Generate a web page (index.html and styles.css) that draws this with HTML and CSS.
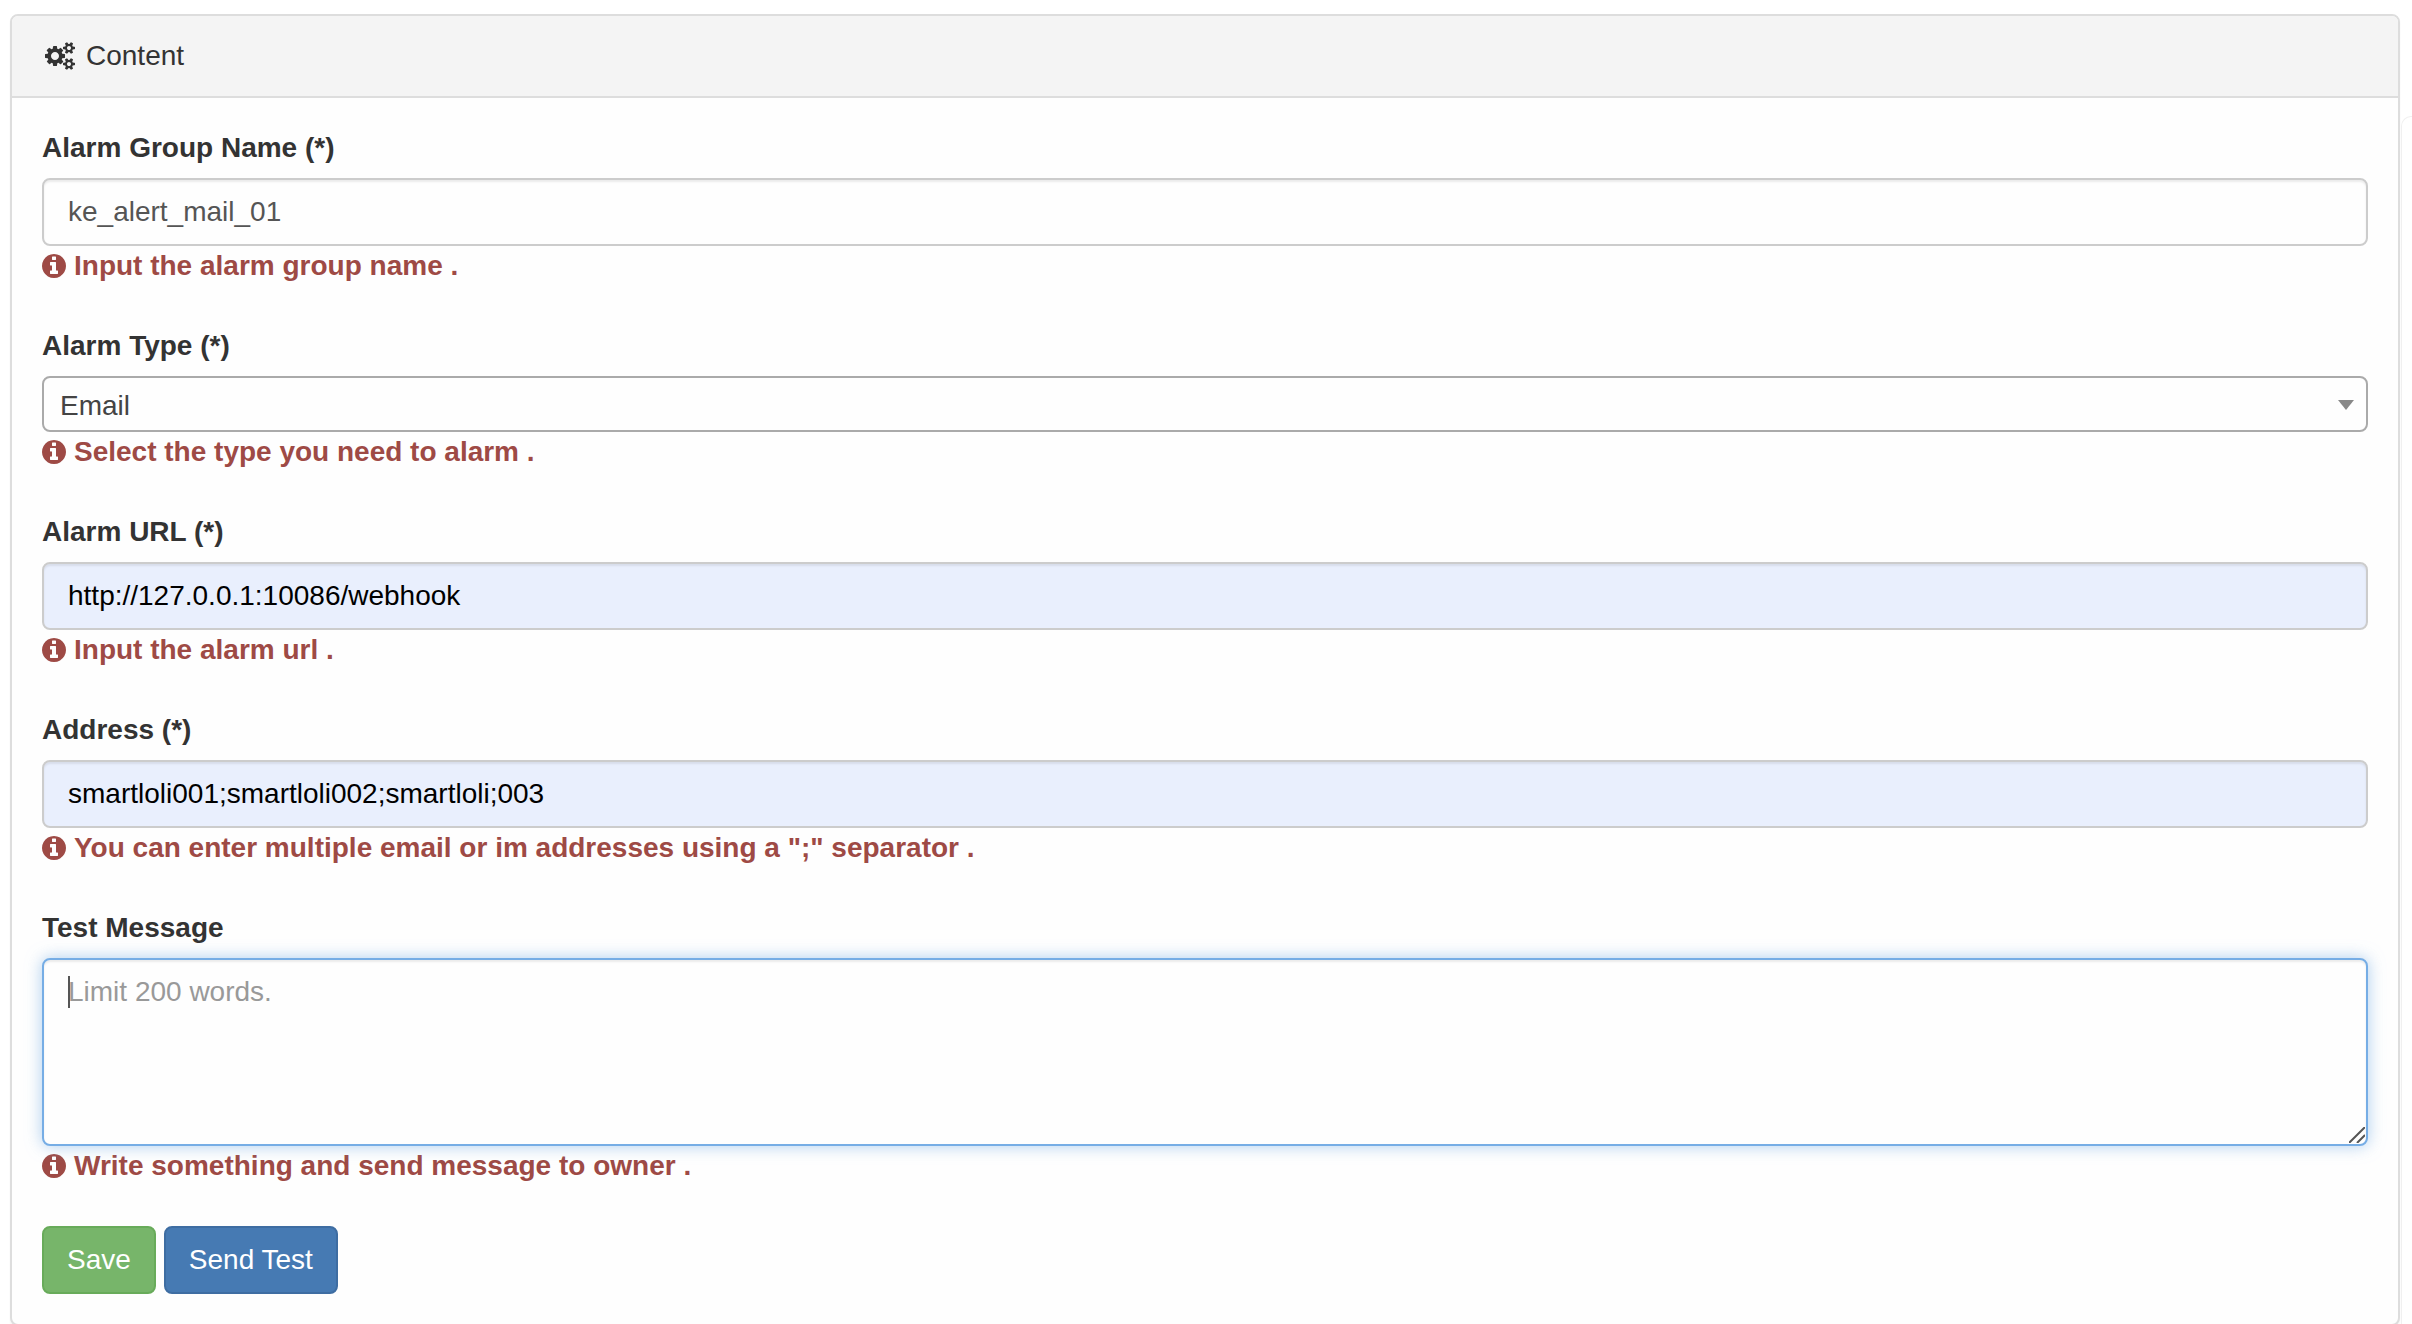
FILE: index.html
```html
<!DOCTYPE html>
<html lang="en">
<head>
    <meta charset="UTF-8">
    <meta name="viewport" content="width=device-width, initial-scale=1.0">
    <title>Alarm Config</title>
    <link rel="stylesheet" href="styles.css">
</head>
<body>
    <svg class="sprite" aria-hidden="true">
        <symbol id="info" viewBox="128 128 1536 1536">
            <path d="M1152 1376v-160q0-14-9-23t-23-9h-96v-512q0-14-9-23t-23-9h-320q-14 0-23 9t-9 23v160q0 14 9 23t23 9h96v320h-96q-14 0-23 9t-9 23v160q0 14 9 23t23 9h448q14 0 23-9t9-23zm-128-896v-160q0-14-9-23t-23-9h-192q-14 0-23 9t-9 23v160q0 14 9 23t23 9h192q14 0 23-9t9-23zm640 416q0 209-103 385.5t-279.5 279.5-385.5 103-385.5-103-279.5-279.5-103-385.5 103-385.5 279.5-279.5 385.5-103 385.5 103 279.5 279.5 103 385.5z"/>
        </symbol>
    </svg>
    <div class="page">
        <div class="panel">
            <div class="panel-heading">
                <svg class="icon-cogs" viewBox="0 0 1920 1792" aria-hidden="true">
                    <path d="M896 896q0-106-75-181t-181-75-181 75-75 181 75 181 181 75 181-75 75-181zm768 512q0-52-38-90t-90-38-90 38-38 90q0 53 37.5 90.5t90.5 37.5 90.5-37.5 37.5-90.5zm0-1024q0-52-38-90t-90-38-90 38-38 90q0 53 37.5 90.5t90.5 37.5 90.5-37.5 37.5-90.5zm-384 421v185q0 10-7 19.5t-16 10.5l-155 24q-11 35-32 76 34 48 90 115 7 11 7 20 0 12-7 19-23 30-82.5 89.5t-78.5 59.5q-11 0-21-7l-115-90q-37 19-77 31-11 108-23 155-7 24-30 24h-186q-11 0-20-7.5t-10-17.5l-23-153q-34-10-75-31l-118 89q-7 7-20 7-11 0-21-8-144-133-144-160 0-9 7-19 10-14 41-53t47-61q-23-44-35-82l-152-24q-10-1-17-9.5t-7-19.5v-185q0-10 7-19.5t16-10.5l155-24q11-35 32-76-34-48-90-115-7-11-7-20 0-12 7-20 22-30 82-89t79-59q11 0 21 7l115 90q34-18 77-32 11-108 23-154 7-24 30-24h186q11 0 20 7.5t10 17.5l23 153q34 10 75 31l118-89q8-7 20-7 11 0 21 8 144 133 144 160 0 8-7 19-12 16-42 54t-45 60q23 48 34 82l152 23q10 2 17 10.5t7 19.5zm640 533v140q0 16-149 31-12 27-30 52 51 113 51 138 0 4-4 7-122 71-124 71-8 0-46-47t-52-68q-20 2-30 2t-30-2q-14 21-52 68t-46 47q-2 0-124-71-4-3-4-7 0-25 51-138-18-25-30-52-149-15-149-31v-140q0-16 149-31 13-29 30-52-51-113-51-138 0-4 4-7 4-2 35-20t59-34 30-16q8 0 46 46.5t52 67.5q20-2 30-2t30 2q51-71 92-112l6-2q4 0 124 70 4 3 4 7 0 25-51 138 17 23 30 52 149 15 149 31zm0-1024v140q0 16-149 31-12 27-30 52 51 113 51 138 0 4-4 7-122 71-124 71-8 0-46-47t-52-68q-20 2-30 2t-30-2q-14 21-52 68t-46 47q-2 0-124-71-4-3-4-7 0-25 51-138-18-25-30-52-149-15-149-31v-140q0-16 149-31 13-29 30-52-51-113-51-138 0-4 4-7 4-2 35-20t59-34 30-16q8 0 46 46.5t52 67.5q20-2 30-2t30 2q51-71 92-112l6-2q4 0 124 70 4 3 4 7 0 25-51 138 17 23 30 52 149 15 149 31z"/>
                </svg>
                <span>Content</span>
            </div>
            <form class="panel-body">
                <div class="form-group">
                    <label for="group_name">Alarm Group Name (*)</label>
                    <input type="text" id="group_name" class="form-control" value="ke_alert_mail_01" autocomplete="off">
                    <p class="hint"><svg class="icon-info" aria-hidden="true"><use href="#info"/></svg>Input the alarm group name .</p>
                </div>
                <div class="form-group">
                    <label for="alarm_type">Alarm Type (*)</label>
                    <div class="select-box">
                        <select id="alarm_type">
                            <option selected>Email</option>
                        </select>
                    </div>
                    <p class="hint"><svg class="icon-info" aria-hidden="true"><use href="#info"/></svg>Select the type you need to alarm .</p>
                </div>
                <div class="form-group">
                    <label for="alarm_url">Alarm URL (*)</label>
                    <input type="text" id="alarm_url" class="form-control filled" value="http://127.0.0.1:10086/webhook">
                    <p class="hint"><svg class="icon-info" aria-hidden="true"><use href="#info"/></svg>Input the alarm url .</p>
                </div>
                <div class="form-group">
                    <label for="address">Address (*)</label>
                    <input type="text" id="address" class="form-control filled" value="smartloli001;smartloli002;smartloli;003">
                    <p class="hint"><svg class="icon-info" aria-hidden="true"><use href="#info"/></svg>You can enter multiple email or im addresses using a ";" separator .</p>
                </div>
                <div class="form-group">
                    <label for="test_msg">Test Message</label>
                    <div class="message-box">
                        <textarea id="test_msg" class="form-control active" rows="4" maxlength="200" placeholder="Limit 200 words."></textarea>
                        <span class="caret"></span>
                        <svg class="grip" viewBox="0 0 16 16" aria-hidden="true">
                            <path d="M0 16L16 0M8 16L16 8"/>
                        </svg>
                    </div>
                    <p class="hint"><svg class="icon-info" aria-hidden="true"><use href="#info"/></svg>Write something and send message to owner .</p>
                </div>
                <div class="buttons">
                    <button type="button" class="btn btn-success">Save</button>
                    <button type="button" class="btn btn-primary">Send Test</button>
                </div>
            </form>
        </div>
        <div class="side-edge"></div>
    </div>
</body>
</html>
```

FILE: styles.css
```css
* {
    box-sizing: border-box;
}
body {
    margin: 0;
    background-color: #fff;
    color: #333;
    font-family: "Helvetica Neue", "Liberation Sans", Arial, sans-serif;
    font-size: 28px;
    line-height: 40px;
}
.sprite {
    display: none;
}
.page {
    display: flex;
    gap: 1px;
    padding: 14px 0 0 10px;
}
.panel {
    flex: 1;
    min-width: 0;
    border: 2px solid #ddd;
    border-radius: 8px;
    background-color: #fefefe;
    box-shadow: 0 2px 2px rgba(0, 0, 0, .05);
}
/* rounded edge of the drawer that sits off screen */
.side-edge {
    flex: 0 0 11px;
    margin-top: 102px;
    border: 1px solid #f0f0f0;
    border-width: 1px 0 0 1px;
    border-radius: 10px 0 0 0;
}
.panel-heading {
    display: flex;
    align-items: center;
    gap: 11px;
    padding: 20px 33px;
    background-color: #f4f4f4;
    border-bottom: 2px solid #ddd;
    border-radius: 6px 6px 0 0;
}
.icon-cogs {
    width: 30px;
    height: 28px;
    fill: #333;
}
.panel-body {
    padding: 30px;
}
.form-group {
    display: flex;
    flex-direction: column;
    gap: 10px;
    margin-bottom: 40px;
}
.form-group label {
    align-self: flex-start;
    font-weight: 700;
}
.form-control {
    display: block;
    width: 100%;
    margin: 0;
    padding: 12px 24px;
    border: 2px solid #ccc;
    border-radius: 8px;
    background-color: #fefefe;
    box-shadow: inset 0 2px 2px rgba(0, 0, 0, .075);
    color: #555;
    font: inherit;
    outline: none;
}
input.form-control {
    height: 68px;
}
.form-control.filled {
    background-color: #e9effd;
    color: #000;
}
textarea.form-control {
    resize: none;
}
.form-control.active,
.form-control:focus {
    border-color: #76ade5;
    box-shadow: inset 0 2px 2px rgba(0, 0, 0, .075), 0 0 16px rgba(118, 173, 229, .6);
}
.form-control::placeholder {
    color: #999;
    opacity: 1;
}
.select-box,
.message-box {
    position: relative;
}
.select-box select {
    display: block;
    width: 100%;
    height: 56px;
    padding: 4px 40px 0 16px;
    appearance: none;
    border: 2px solid #aaa;
    border-radius: 8px;
    background-color: #fefefe;
    color: #444;
    font: inherit;
    outline: none;
}
.select-box::after {
    content: "";
    position: absolute;
    top: 24px;
    right: 14px;
    border: 8px solid transparent;
    border-top: 10px solid #888;
    border-bottom: 0;
    pointer-events: none;
}
.caret {
    position: absolute;
    top: 18px;
    left: 26px;
    width: 2px;
    height: 32px;
    background-color: #555;
}
.grip {
    position: absolute;
    right: 3px;
    bottom: 3px;
    width: 16px;
    height: 16px;
    fill: none;
    stroke: #555;
    stroke-width: 2;
    pointer-events: none;
}
.hint {
    display: flex;
    align-items: center;
    gap: 8px;
    margin: -10px 0 0;
    color: #9e4a45;
    font-weight: 700;
}
.icon-info {
    flex: none;
    width: 24px;
    height: 24px;
    fill: #9e4a45;
}
.buttons {
    display: flex;
    gap: 8px;
}
.btn {
    padding: 12px 23px;
    border: 2px solid;
    border-radius: 8px;
    color: #fff;
    font: inherit;
    cursor: pointer;
}
.btn-success {
    background-color: #77b56a;
    border-color: #68ab5a;
}
.btn-primary {
    background-color: #467ab3;
    border-color: #3e6da2;
}
```
